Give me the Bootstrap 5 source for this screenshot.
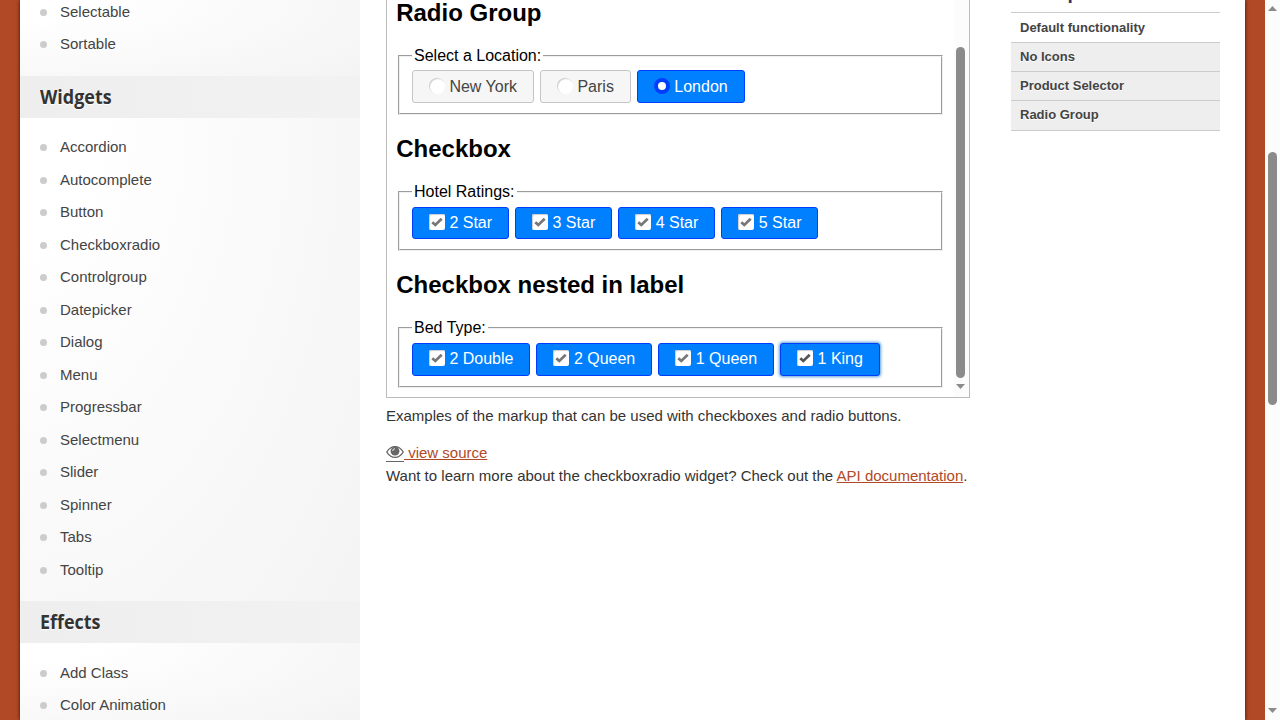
<!DOCTYPE html>
<html lang="en">
<head>
<meta charset="utf-8">
<title>Checkboxradio | jQuery UI</title>
<link href="https://cdn.jsdelivr.net/npm/bootstrap@5.3.0/dist/css/bootstrap.min.css" rel="stylesheet">
<style>
body{font-family:"Liberation Sans",Arial,sans-serif;font-size:15px;line-height:22.5px;color:#333;background:#b24926}
a{color:#b24926}
.sheet{width:1225px;margin-left:20px;box-shadow:0 0 4px rgba(0,0,0,.75)}
.sidebar{width:340px}
.grp{background:radial-gradient(ellipse 130% 150% at 0 0,#fff 15%,#f4f4f4 100%)}
.grp.tall{height:483px;padding-top:13px}
.sidebar h3{height:42px;font:700 19.5px/42px "Open Sans",sans-serif;padding-left:20px;background:linear-gradient(to right,#eee,#f2f2f2);color:#333}
.sidebar h3 span{display:inline-block;transform-origin:left;transform:scaleX(.92);text-shadow:0 1px 0 #fff}
.sidebar li{height:32.5px;line-height:32.5px;color:#444;padding-left:20px}
.sidebar li::before{content:"";width:7px;height:7px;border-radius:50%;background:#ccc;margin-right:13px;margin-top:1px}
.main{width:584px;margin-left:26px}
.frame{height:398px;border:1px solid #bbb;border-top:0}
.demo{font-size:16px;line-height:18px;color:#000;padding:0 11px 0 9px}
.demo section{height:136px}
.demo h2{font-size:24px;font-weight:700;line-height:26px;margin:0 0 21px .2px}
.demo fieldset{border:2px groove #f0f0f0;padding:5px 12px 9px;height:68px;margin:0 0 0 2px}
.demo section+section fieldset{padding-top:6px;padding-bottom:8px}
.demo section:last-child fieldset{height:69px}
.demo legend{float:none;width:auto;font-size:16px;line-height:18px;padding:0 2px;margin:0}
.demo .choices{gap:6.05px}
.demo .btn{border-radius:3px;font-size:16px;line-height:19px;padding:6px 16px;height:33px;border:1px solid #c5c5c5;background:#f6f6f6;color:#454545;gap:4.4px}
.demo .btn.on{background:#007fff;border-color:#003eff;color:#fff}
.demo .btn.lowrow{height:32px;padding-top:5px;padding-bottom:6px}
.demo .btn.foc{box-shadow:0 0 3px 1px #5e9ed6}
.tick{width:16px;height:16px;border-radius:2px;background:#fff;box-shadow:inset 1px 1px 1px #ccc;margin-top:-1px}
.dot{width:16px;height:16px;border-radius:8px;background:#fff;box-shadow:inset 1px 1px 1px #ccc;margin-top:-1px}
.on .dot{border:4px solid #003eff;box-shadow:none}
.bar{width:15px;background:#fcfcfc}
.thumb{width:9px;border-radius:5px;background:#8b8b8b}
.eye{border-bottom:1px solid #666;display:inline-block;height:17px;line-height:14px;vertical-align:-4px}
.menu{width:209px;margin-left:41px}
.menu h3{font:700 20px/24px "Open Sans",sans-serif;color:#333366;height:12px;margin:0;padding-left:9px}
.menu h3 span{display:block;margin-top:-21px;transform:scaleX(.87);transform-origin:left}
.menu li{font-size:13px;font-weight:700;color:#444;background:#eee;height:29px;line-height:28px;border-top:1px solid #ccc;padding-left:9px;text-shadow:0 1px 0 #fff}
.menu li:first-child{background:#fff;height:30px;line-height:29px}
.menu li:last-child{height:31px;border-bottom:1px solid #ccc}
</style>
</head>
<body>
<svg class="d-none"><symbol id="check" viewBox="0 0 16 16"><path d="M3.3 8.2 6.3 11 12.7 4.8" fill="none" stroke="currentColor" stroke-width="2.7"/></symbol></svg>
<div class="d-flex vh-100 overflow-hidden">
  <div class="sheet d-flex bg-white flex-shrink-0">
    <aside class="sidebar flex-shrink-0">
      <div class="grp overflow-hidden" style="height:76px">
        <ul class="list-unstyled mb-0" style="margin-top:-4.5px"><li class="d-flex align-items-center">Selectable</li><li class="d-flex align-items-center">Sortable</li></ul>
      </div>
      <h3 class="mb-0"><span>Widgets</span></h3>
      <div class="grp tall">
        <ul class="list-unstyled mb-0">
          <li class="d-flex align-items-center">Accordion</li><li class="d-flex align-items-center">Autocomplete</li><li class="d-flex align-items-center">Button</li><li class="d-flex align-items-center">Checkboxradio</li><li class="d-flex align-items-center">Controlgroup</li><li class="d-flex align-items-center">Datepicker</li><li class="d-flex align-items-center">Dialog</li><li class="d-flex align-items-center">Menu</li><li class="d-flex align-items-center">Progressbar</li><li class="d-flex align-items-center">Selectmenu</li><li class="d-flex align-items-center">Slider</li><li class="d-flex align-items-center">Spinner</li><li class="d-flex align-items-center">Tabs</li><li class="d-flex align-items-center">Tooltip</li>
        </ul>
      </div>
      <h3 class="mb-0"><span>Effects</span></h3>
      <div class="grp overflow-hidden" style="height:77px;padding-top:13.5px">
        <ul class="list-unstyled mb-0"><li class="d-flex align-items-center">Add Class</li><li class="d-flex align-items-center">Color Animation</li></ul>
      </div>
    </aside>
    <main class="main flex-shrink-0">
      <div class="frame d-flex overflow-hidden">
        <div class="demo flex-grow-1">
          <section><h2>Radio Group</h2>
            <fieldset><legend>Select a Location:</legend><div class="choices d-flex">
              <label class="btn d-flex align-items-center"><i class="dot"></i>New York</label><label class="btn d-flex align-items-center"><i class="dot"></i>Paris</label><label class="btn on d-flex align-items-center"><i class="dot"></i>London</label></div></fieldset>
          </section>
          <section><h2>Checkbox</h2>
            <fieldset><legend>Hotel Ratings:</legend><div class="choices d-flex">
              <label class="btn on lowrow d-flex align-items-center"><svg class="tick" color="#777"><use href="#check"/></svg>2 Star</label><label class="btn on lowrow d-flex align-items-center"><svg class="tick" color="#777"><use href="#check"/></svg>3 Star</label><label class="btn on lowrow d-flex align-items-center"><svg class="tick" color="#777"><use href="#check"/></svg>4 Star</label><label class="btn on lowrow d-flex align-items-center"><svg class="tick" color="#777"><use href="#check"/></svg>5 Star</label></div></fieldset>
          </section>
          <section><h2>Checkbox nested in label</h2>
            <fieldset><legend>Bed Type:</legend><div class="choices d-flex">
              <label class="btn on d-flex align-items-center pt-1"><svg class="tick" color="#777"><use href="#check"/></svg>2 Double</label><label class="btn on d-flex align-items-center pt-1"><svg class="tick" color="#777"><use href="#check"/></svg>2 Queen</label><label class="btn on d-flex align-items-center pt-1"><svg class="tick" color="#777"><use href="#check"/></svg>1 Queen</label><label class="btn on foc d-flex align-items-center pt-1"><svg class="tick" color="#555"><use href="#check"/></svg>1 King</label></div></fieldset>
          </section>
        </div>
        <div class="bar flex-shrink-0 d-flex flex-column align-items-center">
          <div class="thumb" style="height:331px;margin-top:47px;margin-right:2px"></div>
          <svg width="9" height="5" viewBox="0 0 9 5" style="margin-top:6px;margin-right:2px"><path d="M0 0H9L4.5 5Z" fill="#8b8b8b"/></svg>
        </div>
      </div>
      <p class="mb-0" style="margin-top:7px">Examples of the markup that can be used with checkboxes and radio buttons.</p>
      <div style="margin-top:14px;height:22.5px"><a href="#"><span class="eye"><svg class="d-block" width="18" height="14" viewBox="0 0 18 14"><path d="M.8 7Q4 1.6 9 1.6T17.2 7Q14 12.4 9 12.4T.8 7Z" fill="#fff" stroke="#666" stroke-width="1.4"/><circle cx="9" cy="6.2" r="4.4" fill="#666"/><path d="M6.6 6Q6.8 3.9 9 3.7" fill="none" stroke="#fff" stroke-width=".9"/></svg></span> view source</a></div>
      <p class="mb-0 text-nowrap" style="margin-top:.6px">Want to learn more about the checkboxradio widget? Check out the <a href="#">API documentation</a>.</p>
    </main>
    <nav class="menu flex-shrink-0">
      <h3 class="overflow-hidden"><span>Examples</span></h3>
      <ul class="list-unstyled mb-0"><li>Default functionality</li><li>No Icons</li><li>Product Selector</li><li>Radio Group</li></ul>
    </nav>
  </div>
  <div class="bar ms-auto flex-shrink-0 d-flex flex-column align-items-center">
    <svg width="9" height="5" viewBox="0 0 9 5" style="margin-top:6px"><path d="M0 5H9L4.5 0Z" fill="#8b8b8b"/></svg>
    <div class="thumb" style="height:253px;margin-top:141px"></div>
    <svg class="mt-auto" width="9" height="5" viewBox="0 0 9 5" style="margin-bottom:7px"><path d="M0 0H9L4.5 5Z" fill="#8b8b8b"/></svg>
  </div>
</div>
<script src="https://cdn.jsdelivr.net/npm/bootstrap@5.3.0/dist/js/bootstrap.bundle.min.js"></script>
</body>
</html>
